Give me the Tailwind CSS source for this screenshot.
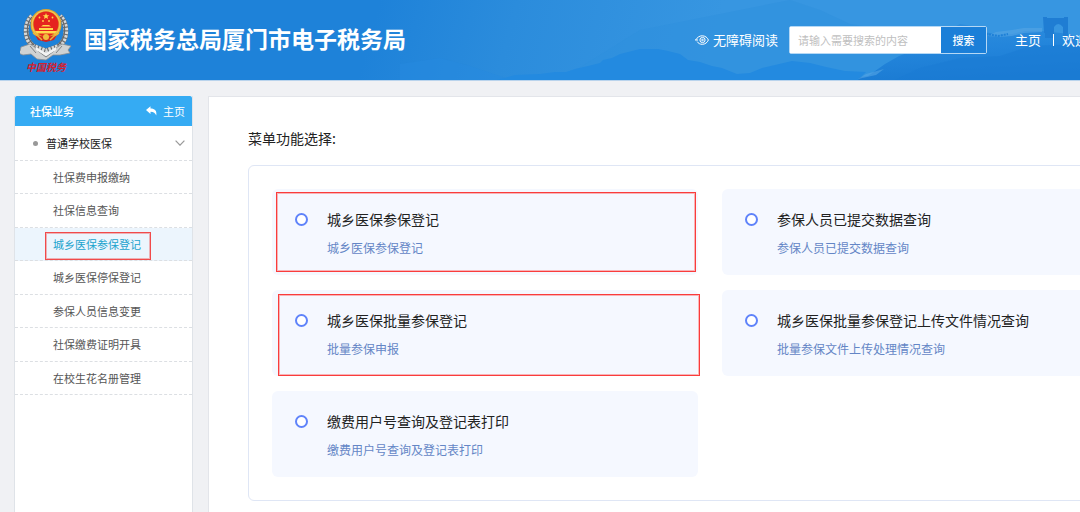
<!DOCTYPE html>
<html lang="zh-CN">
<head>
    <meta charset="UTF-8">
    <meta name="viewport" content="width=device-width, initial-scale=1.0">
    <title>国家税务总局厦门市电子税务局</title>
    <script src="https://cdn.jsdelivr.net/npm/@tailwindcss/browser@4"></script>
</head>
<body class="overflow-x-hidden bg-[#f0f1f4] font-['Noto_Sans_CJK_SC',sans-serif] text-[#222]">
    <div class="flex min-h-screen min-w-[1228px] flex-col">

        <header class="relative h-[81px] overflow-hidden border-b border-[#b9d3ec] bg-[#1e82d9]">
            <!-- hills and the wall -->
            <svg class="absolute inset-0 h-20 w-full" viewBox="0 0 1228 80" preserveAspectRatio="xMinYMin slice" aria-hidden="true">
                <defs>
                    <linearGradient id="sky" gradientUnits="userSpaceOnUse" x1="380" y1="0" x2="700" y2="90">
                        <stop offset="0" stop-color="#1e82d9"/>
                        <stop offset="0.4" stop-color="#2b8cdc"/>
                        <stop offset="1" stop-color="#3796e1"/>
                    </linearGradient>
                    <linearGradient id="wallhill" x1="0" y1="0" x2="0.4" y2="1">
                        <stop offset="0" stop-color="#2f8fde"/>
                        <stop offset="0.5" stop-color="#2385db"/>
                        <stop offset="1" stop-color="#1a7ad2"/>
                    </linearGradient>
                </defs>
                <path fill="url(#sky)" d="M0 0h1228v80H0z"/>
                <path fill="#2e90dd" fill-opacity=".5" d="M640 30L700 18 760 6 790 0 820 10 850 24 900 32 960 40V80H560z"/>
                <path fill="#258ae0" fill-opacity=".5" d="M400 64L440 58 470 66 500 76 510 80H400z"/>
                <path fill="url(#wallhill)" d="M836 80L868 76 885 64 899 56 915 50 935 44 948 30 960 24 972 26 985 32 1000 35 1012 34 1025 31 1042 31 1070 34 1085 44 1110 50 1228 40V80z"/>
                <path fill="#238ae0" d="M497 80L515 75 540 74 555 72 566 72 575 69 588 66 600 63 603 60 612 58 620 54 632 51 640 49 658 49 668 51 680 54 688 60 700 62 712 66 722 68 737 74 750 73 762 68 775 65 792 61 810 63 826 67 845 71 866 72 858 80z"/>
                <path fill="#1a7bd4" fill-opacity=".6" d="M895 80L920 68 960 58 1000 56 1030 46 1080 44 1228 30V80z"/>
                <path fill="#5aa7e6" fill-opacity=".55" d="M987 36L996 32 1012 30 1024 28 1042 28V32L1024 33 1012 36 1000 37zM858 79L866 74 884 69 876 75z"/>
                <path fill="#1f7dd3" d="M1043 17h4v1h17v-1h4v19h-5v-9q-5-6-9 0v11h-9v-5h-1z"/>
                <path fill="none" stroke="#1e80d7" stroke-width="2" stroke-dasharray="2 1" d="M986 34L998 36 1008 34M1066 34L1080 40"/>
            </svg>

            <div class="relative flex h-20 items-center">
                <div class="ml-5 flex w-[52px] shrink-0 flex-col items-center">
                    <svg class="h-[54px] w-[52px]" viewBox="0 0 52 54" aria-hidden="true">
                        <!-- wreath -->
                        <path d="M12 9C4 17 4 32 13 39l13 5 13-5c9-7 9-22 1-30" fill="none" stroke="#6f7072" stroke-width="5"/>
                        <path d="M12 9C4 17 4 32 13 39l13 5 13-5c9-7 9-22 1-30" fill="none" stroke="#d6d9da" stroke-width="4.500" stroke-dasharray="2.400 1.200"/>
                        <path d="M12 10C5 18 6 31 14 38M40 10c7 8 6 21-2 28" fill="none" stroke="#66686a" stroke-width="1.200"/>
                        <!-- ribbon -->
                        <path d="M1 40l9-3 6 4 10 6 10-6 6-4 9 2-3 4 2 3-10 2-7 0-7 5-9-1-6-5-8 1-7-3 4-1z" fill="#cfd2d3" stroke="#8b8e90" stroke-width=".8"/>
                        <path d="M10 39l6 7M42 39l-6 7M18 44l8 6 8-6" fill="none" stroke="#808385" stroke-width="1"/>
                        <path d="M16 40l10 6 10-6v3l-10 6-10-6z" fill="#f3f4f4"/>
                        <!-- national emblem -->
                        <circle cx="26" cy="17.500" r="15.500" fill="#dfa42e"/>
                        <circle cx="26" cy="17.500" r="13.800" fill="none" stroke="#f0c655" stroke-width="1.200"/>
                        <circle cx="26" cy="17" r="12.500" fill="#e5241f"/>
                        <path d="M26 6l.9 2.200 2.400.1-1.900 1.500.7 2.300-2.100-1.300-2.100 1.300.7-2.300-1.900-1.500 2.400-.1z" fill="#ffd84b"/>
                        <g fill="#ffd84b">
                            <circle cx="19.500" cy="10.500" r=".9"/><circle cx="32.500" cy="10.500" r=".9"/>
                            <circle cx="23" cy="14" r=".9"/><circle cx="29" cy="14" r=".9"/>
                            <path d="M21 19.500l2-1.500h6l2 1.500zM19 21h14v2H19zM15 24h22l-2 2.500H17z"/>
                        </g>
                        <path d="M15 28l11 2 11-2-3 5-8 2-8-2z" fill="#d32620"/>
                        <circle cx="26" cy="30" r="3" fill="#f0bd3d"/>
                        <path d="M13 26l5 3 4 4M39 26l-5 3-4 4" fill="none" stroke="#e9b53a" stroke-width="1.500"/>
                    </svg>
                    <span class="font-['Noto_Sans_CJK_SC',sans-serif] text-[10px] leading-3 font-bold text-[#d3202f] italic">中国税务</span>
                </div>
                <h1 class="ml-3 pb-1 text-[23px] leading-8 font-bold whitespace-nowrap text-white">国家税务总局厦门市电子税务局</h1>

                <a href="#" class="ml-auto flex items-center gap-1 text-[13px] leading-5 text-white">
                    <svg class="h-3 w-[14px]" viewBox="0 0 14 12" fill="none" stroke="currentColor" stroke-width="1" aria-hidden="true">
                        <path d="M.3 6.300C2.500 3.200 4.500 1.800 7.200 1.800c3 0 5.300 1.800 6.200 4.200-1.100 2.600-3.300 4.300-6.200 4.300-2.200 0-3.900-.9-5-2.700"/>
                        <path d="M.3 6h2.700"/>
                        <circle cx="7.500" cy="6" r="2.600"/>
                        <circle cx="7.500" cy="6" r=".8"/>
                    </svg>
                    无障碍阅读
                </a>
                <form class="ml-[11px] flex h-7 w-[198px] rounded-xs border border-[#b5d8f5]">
                    <input type="text" aria-label="搜索内容" placeholder="请输入需要搜索的内容" class="min-w-0 flex-1 bg-white px-2 text-[11px] outline-none placeholder:text-[#bfbfbf]">
                    <button type="button" class="w-[45px] bg-[#1b7fd8] text-[11px] font-medium text-white">搜索</button>
                </form>
                <nav class="ml-7 flex w-[213px] items-center text-[13px] leading-5 text-white">
                    <a href="#">主页</a>
                    <span class="ml-3 h-3 w-px bg-white"></span>
                    <span class="ml-2">欢迎</span>
                </nav>
            </div>
        </header>

        <div class="flex flex-1 gap-[15px] pt-[15px] pr-4 pl-[14px]">
            <aside class="w-[179px] shrink-0 border-x border-[#dfe3e8] bg-white">
                <div class="flex h-[30px] items-center justify-between rounded-t-xs bg-[#35abf3] pr-[7px] pl-[15px] text-[11px] text-white">
                    <span class="font-medium">社保业务</span>
                    <a href="#" class="flex items-center gap-[6px]">
                        <svg class="h-[10px] w-[11px]" viewBox="0 0 11 10" fill="currentColor" aria-hidden="true">
                            <path d="M0 4L4.500.3v2.300C8.800 2.700 11 4.600 10.300 9.500 9.300 7 7.800 5.800 4.500 5.700V8z"/>
                        </svg>
                        主页
                    </a>
                </div>
                <button type="button" class="flex h-[35px] w-full items-center border-b border-dashed border-[#dcdfe3] pr-[7px] pl-[18px] text-[11px]">
                    <span class="size-[5px] rounded-full bg-[#999]"></span>
                    <span class="ml-2">普通学校医保</span>
                    <svg class="ml-auto h-[6px] w-[10px]" viewBox="0 0 10 6" fill="none" stroke="#999" stroke-width="1.200" aria-hidden="true"><path d="M.6.6L5 5.200 9.400.6"/></svg>
                </button>
                <ul class="grid h-[234px] grid-rows-7 text-[11px] text-[#555]">
                    <li class="flex items-center border-b border-dashed border-[#dcdfe3] pl-[38px]"><a href="#">社保费申报缴纳</a></li>
                    <li class="flex items-center border-b border-dashed border-[#dcdfe3] pl-[38px]"><a href="#">社保信息查询</a></li>
                    <li class="relative flex items-center border-b border-dashed border-[#dcdfe3] bg-[#ecf5fd] pl-[38px] text-[#1ba3cd]">
                        <a href="#">城乡医保参保登记</a>
                        <span class="absolute top-1 left-[30px] h-7 w-[106px] border border-[#f14a4a] ring-1 ring-[#f14a4a]/40 ring-inset"></span>
                    </li>
                    <li class="flex items-center border-b border-dashed border-[#dcdfe3] pl-[38px]"><a href="#">城乡医保停保登记</a></li>
                    <li class="flex items-center border-b border-dashed border-[#dcdfe3] pl-[38px]"><a href="#">参保人员信息变更</a></li>
                    <li class="flex items-center border-b border-dashed border-[#dcdfe3] pl-[38px]"><a href="#">社保缴费证明开具</a></li>
                    <li class="flex items-center border-b border-dashed border-[#dcdfe3] pl-[38px]"><a href="#">在校生花名册管理</a></li>
                </ul>
            </aside>

            <main class="min-w-0 flex-1 border-x border-t border-[#e3e5ea] bg-white px-[39px] pt-[31px] pb-[11px]">
                <h2 class="text-sm leading-5">菜单功能选择:</h2>
                <div class="mt-[17px] grid grid-cols-2 gap-x-6 gap-y-[15px] rounded-md border border-[#dfe6f5] p-[23px]">
                    <label class="relative flex gap-[19px] rounded-md bg-[#f5f8ff] pt-5 pb-[17px] pl-[23px]">
                        <input type="radio" name="menu" class="mt-1 size-[13px] shrink-0 appearance-none rounded-full border-2 border-[#5f83fa] bg-white">
                        <span class="flex flex-col gap-[9px]">
                            <span class="text-sm leading-5">城乡医保参保登记</span>
                            <span class="text-xs leading-5 text-[#6486c6]">城乡医保参保登记</span>
                        </span>
                        <span class="absolute top-[3px] right-[2px] bottom-[3px] left-1 border border-[#fa3c3c] ring-1 ring-[#fa4b4b]/40 ring-inset"></span>
                    </label>
                    <label class="flex gap-[19px] rounded-md bg-[#f5f8ff] pt-5 pb-[17px] pl-[23px]">
                        <input type="radio" name="menu" class="mt-1 size-[13px] shrink-0 appearance-none rounded-full border-2 border-[#5f83fa] bg-white">
                        <span class="flex flex-col gap-[9px]">
                            <span class="text-sm leading-5">参保人员已提交数据查询</span>
                            <span class="text-xs leading-5 text-[#6486c6]">参保人员已提交数据查询</span>
                        </span>
                    </label>
                    <label class="relative flex gap-[19px] rounded-md bg-[#f5f8ff] pt-5 pb-[17px] pl-[23px]">
                        <input type="radio" name="menu" class="mt-1 size-[13px] shrink-0 appearance-none rounded-full border-2 border-[#5f83fa] bg-white">
                        <span class="flex flex-col gap-[9px]">
                            <span class="text-sm leading-5">城乡医保批量参保登记</span>
                            <span class="text-xs leading-5 text-[#6486c6]">批量参保申报</span>
                        </span>
                        <span class="absolute top-1 -right-[2px] bottom-0 left-[6px] border border-[#fa3c3c] ring-1 ring-[#fa4b4b]/40 ring-inset"></span>
                    </label>
                    <label class="flex gap-[19px] rounded-md bg-[#f5f8ff] pt-5 pb-[17px] pl-[23px]">
                        <input type="radio" name="menu" class="mt-1 size-[13px] shrink-0 appearance-none rounded-full border-2 border-[#5f83fa] bg-white">
                        <span class="flex flex-col gap-[9px]">
                            <span class="text-sm leading-5">城乡医保批量参保登记上传文件情况查询</span>
                            <span class="text-xs leading-5 text-[#6486c6]">批量参保文件上传处理情况查询</span>
                        </span>
                    </label>
                    <label class="flex gap-[19px] rounded-md bg-[#f5f8ff] pt-5 pb-[17px] pl-[23px]">
                        <input type="radio" name="menu" class="mt-1 size-[13px] shrink-0 appearance-none rounded-full border-2 border-[#5f83fa] bg-white">
                        <span class="flex flex-col gap-[9px]">
                            <span class="text-sm leading-5">缴费用户号查询及登记表打印</span>
                            <span class="text-xs leading-5 text-[#6486c6]">缴费用户号查询及登记表打印</span>
                        </span>
                    </label>
                </div>
            </main>
        </div>
    </div>
</body>
</html>
